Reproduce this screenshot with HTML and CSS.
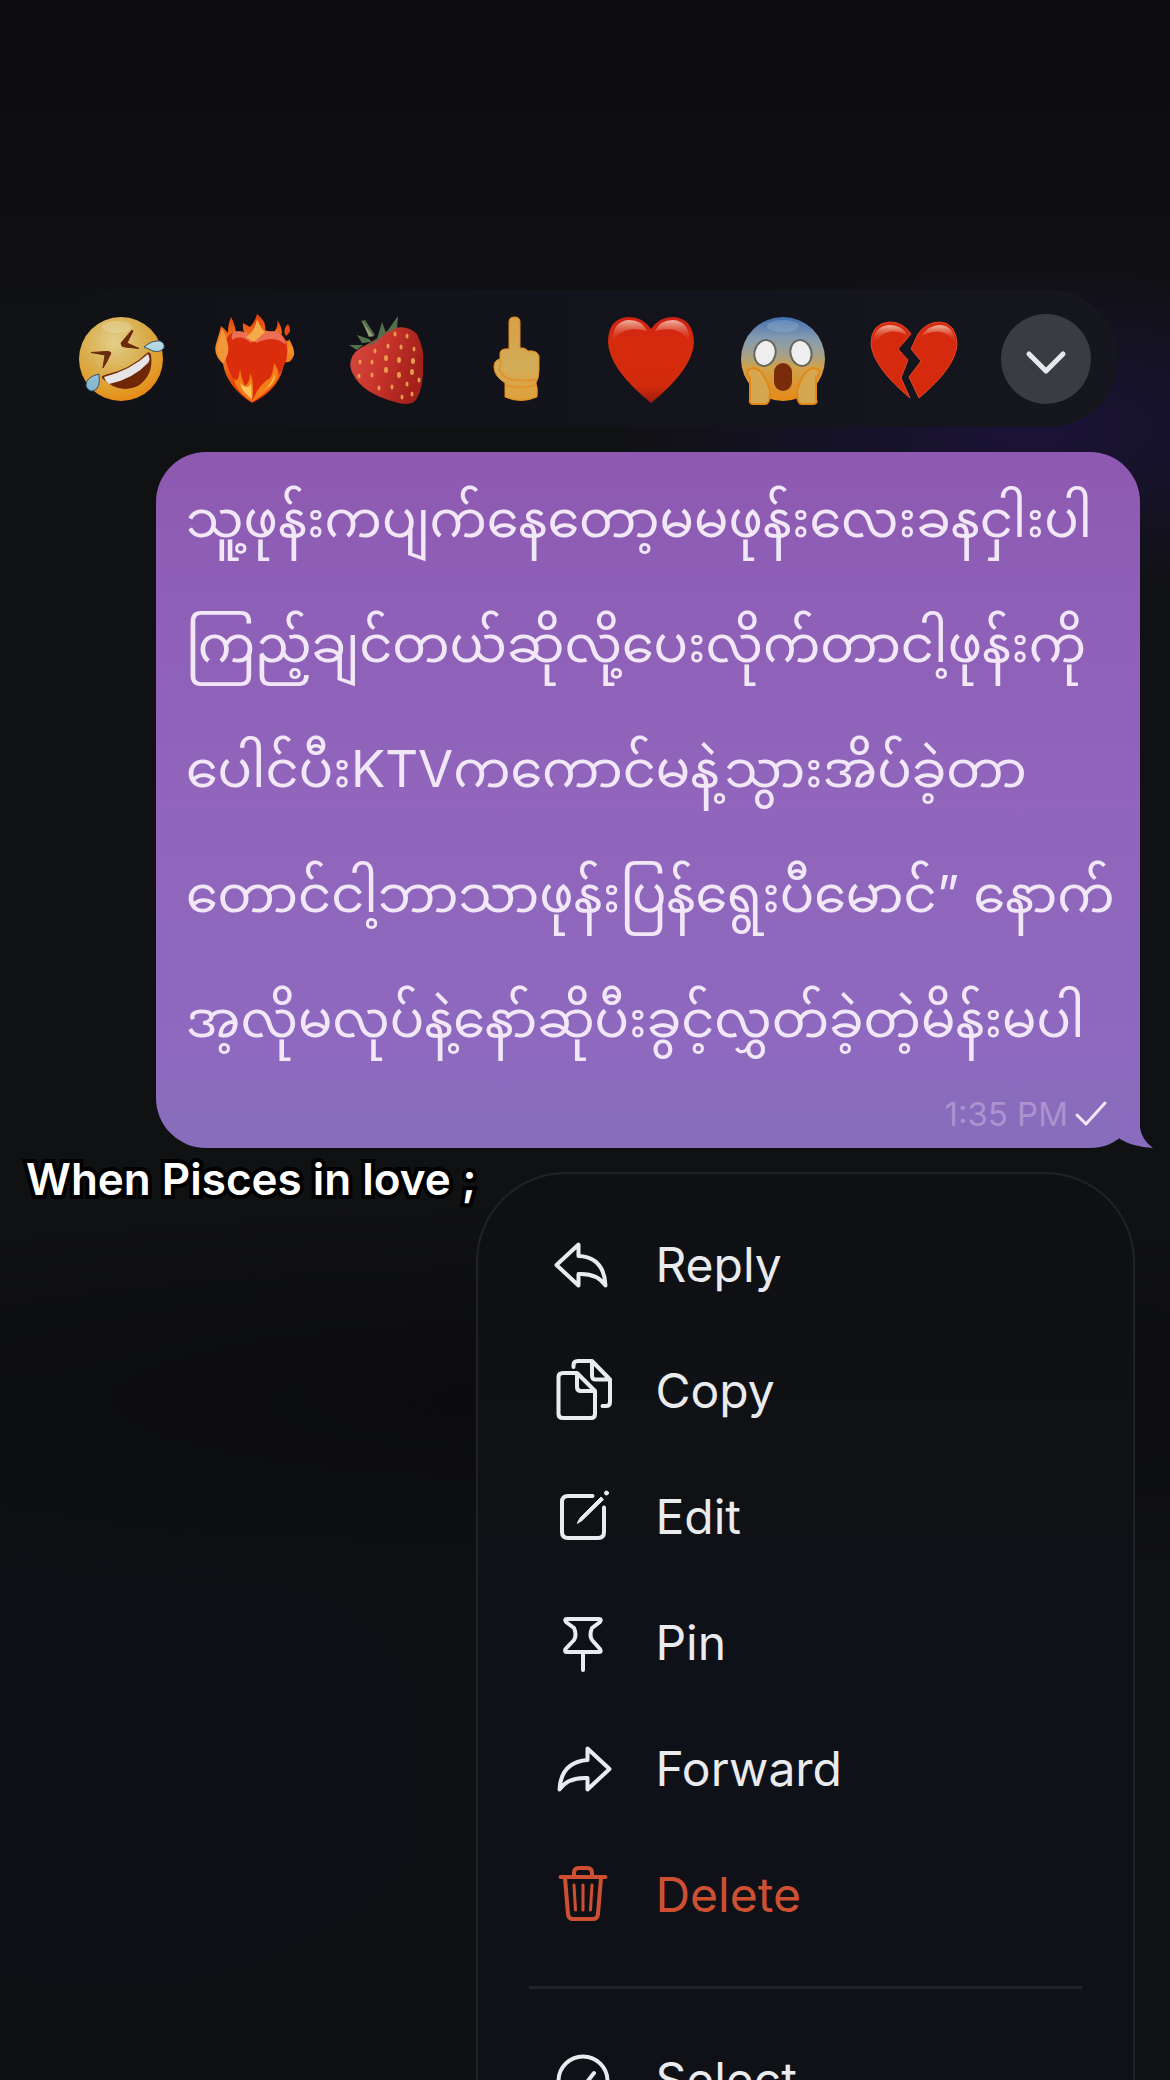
FILE: index.html
```html
<!DOCTYPE html>
<html lang="my">
<head>
<meta charset="utf-8">
<meta name="viewport" content="width=device-width, initial-scale=1">
<title>Message actions</title>
<link rel="stylesheet" href="styles.css">
</head>
<body>
<main class="screen">
  <div class="reactions" role="toolbar" aria-label="Reactions">
    <button class="reaction" type="button" aria-label="Rolling on the floor laughing">
      <svg viewBox="0 0 100 100" aria-hidden="true">
        <defs>
          <radialGradient id="face" cx=".42" cy=".3" r=".75"><stop offset="0" stop-color="#e2cf8c"/><stop offset=".5" stop-color="#d9ad4c"/><stop offset=".8" stop-color="#e39a26"/><stop offset="1" stop-color="#e8800f"/></radialGradient>
          <linearGradient id="tear" x1="0" y1="0" x2="0" y2="1"><stop offset="0" stop-color="#b9dbe4"/><stop offset="1" stop-color="#7fb4cc"/></linearGradient>
        </defs>
        <circle cx="50" cy="50" r="42" fill="url(#face)"/>
        <ellipse cx="46" cy="18" rx="15" ry="6" fill="#ebe2b8" opacity=".35"/>
        <path d="M61 21L50 34Q50 38 54 38L68 39.500L56 34L62 22ZM20 43.500L34 46L32 59Q36 53 40 44Q39 42 35 42.500Z" fill="#6b2a0a" stroke="#6b2a0a" stroke-width="1" stroke-linejoin="round"/>
        <path d="M31 69Q30 67 34 66Q60 60 76 44Q79 42 80 46Q83 66 67 77Q48 86 31 69Z" fill="#702706"/>
        <path d="M33 68Q60 61 77 45Q80 50 77 54Q62 70 38 75Q34 72 33 68Z" fill="#e6e4e6"/>
        <path d="M73 38Q81 31 89 32Q94 34 93 39Q89 44 82 42ZM28 65Q15 68 15 76Q16 82 22 82Q30 80 28 65Z" fill="url(#tear)" stroke="#34546a" stroke-width="1"/>
      </svg>
    </button>
    <button class="reaction" type="button" aria-label="Heart on fire">
      <svg viewBox="0 0 100 100" aria-hidden="true">
        <defs>
          <linearGradient id="flame" x1="0" y1="0" x2="0" y2="1"><stop offset="0" stop-color="#e63b08"/><stop offset=".4" stop-color="#f2912a"/><stop offset=".75" stop-color="#e84a0a"/><stop offset="1" stop-color="#d82a0a"/></linearGradient>
        </defs>
        <path d="M49 94Q24 78 20 55Q10 46 13 35Q16 25 18 17Q22 20 25 24Q25 15 28 8Q33 18 33 25L43 28Q39 20 40 14L47 18Q52 13 54 5Q64 13 62 21L70 24Q76 18 74 11Q81 20 78 28Q86 35 86 30Q92 40 91 46Q88 55 81 53Q78 80 49 94Z" fill="url(#flame)"/>
        <path d="M82 25Q80 20 85 15Q90 22 83 27Z" fill="#e94c12"/>
        <path d="M51 33Q43 20 30 23Q17 31 22 49Q29 76 49 93Q73 77 83 52Q88 30 75 23Q60 20 51 33Z" fill="#d92d0c"/>
        <path d="M50 32Q43 19 30 23Q28 27 29 31Q38 25 48 34ZM52 32Q61 19 75 23Q82 28 83 36Q72 25 53 34Z" fill="#f58a74" opacity=".7"/>
        <path d="M20 54Q12 44 15 34L19 19Q24 29 25 36Q27 45 20 54Z" fill="#f0983a"/>
        <path d="M43 28Q52 23 54 10Q58 20 62 23L51 33Z" fill="#f4ac48"/>
        <path d="M49 93Q32 82 31 69Q35 76 37 60Q39 72 42 77Q47 74 47 64Q52 74 49 93Q55 76 67 69Q70 65 71 54Q77 62 75 69Q69 81 49 93Z" fill="#f47c18"/>
        <path d="M49 90Q38 82 37 74Q45 82 48 74ZM53 86Q66 81 72 65Q73 76 53 86Z" fill="#ffc45a"/>
      </svg>
    </button>
    <button class="reaction" type="button" aria-label="Strawberry">
      <svg viewBox="0 0 100 100" aria-hidden="true">
        <defs>
          <linearGradient id="berry" x1="0" y1="0" x2="1" y2=".3"><stop offset="0" stop-color="#d84a42"/><stop offset=".5" stop-color="#c8352c"/><stop offset="1" stop-color="#a3211a"/></linearGradient>
        </defs>
        <path d="M16 51Q18 42 31 36Q44 29 52 22Q70 13 82 25Q90 41 88 55Q89 78 81 91Q75 98 60 93Q27 84 18 65Q14 58 16 51Z" fill="url(#berry)"/>
        <path d="M26 12L30 11L40 26L37 28ZM22 26L34 30L37 33L27 34ZM14 36L28 36L22 41ZM42 30L47 13L51 24L63 7L62 19L50 25L40 34L30 38Z" fill="#53704a"/>
        <path d="M27 12L38 27L34 28Z" fill="#92a17a"/>
        <g fill="#e99b4d"><ellipse cx="60" cy="25" rx="1.500" ry="2.500"/><ellipse cx="72" cy="27" rx="1.500" ry="2.500"/><ellipse cx="40" cy="42" rx="1.500" ry="2.500"/><ellipse cx="53" cy="37" rx="1.500" ry="2.500"/><ellipse cx="66" cy="38" rx="1.500" ry="2.500"/><ellipse cx="79" cy="40" rx="1.500" ry="2.500"/><ellipse cx="25" cy="53" rx="1.500" ry="2.500"/><ellipse cx="37" cy="53" rx="1.500" ry="2.500"/><ellipse cx="51" cy="49" rx="2" ry="3"/><ellipse cx="64" cy="51" rx="2" ry="3"/><ellipse cx="78" cy="52" rx="2" ry="3"/><ellipse cx="24" cy="67" rx="1.500" ry="2.500"/><ellipse cx="37" cy="66" rx="1.500" ry="2.500"/><ellipse cx="51" cy="61" rx="2" ry="3"/><ellipse cx="64" cy="66" rx="2" ry="3"/><ellipse cx="77" cy="63" rx="2" ry="3"/><ellipse cx="44" cy="79" rx="1.500" ry="2.500"/><ellipse cx="57" cy="78" rx="1.500" ry="2.500"/><ellipse cx="72" cy="75" rx="1.500" ry="2.500"/><ellipse cx="84" cy="71" rx="1.500" ry="2.500"/><ellipse cx="67" cy="88" rx="1.500" ry="2.500"/><ellipse cx="77" cy="85" rx="1.500" ry="2.500"/></g>
      </svg>
    </button>
    <button class="reaction" type="button" aria-label="Middle finger">
      <svg viewBox="0 0 100 100" aria-hidden="true">
        <defs><linearGradient id="skin" x1="0" y1="0" x2="0" y2="1"><stop offset="0" stop-color="#d9a045"/><stop offset=".6" stop-color="#d3ac58"/><stop offset="1" stop-color="#dda03a"/></linearGradient></defs>
        <path d="M42 13Q42 8 47.500 8Q53 8 53 13L53 39Q58 38 61 42Q70 41 72 47V61Q72 69 69 74Q71 79 70 88Q54 95 38 88L38 74Q27 67 27 58Q27 51 33 50V44Q34 39 42 40Z" fill="url(#skin)" stroke="#e38a1c" stroke-width="1"/>
        <path d="M33 51Q35 57 32 60Q38 72 51 71Q61 73 69 70M39 76Q54 81 69 76" fill="none" stroke="#e2932c" stroke-width="2"/>
      </svg>
    </button>
    <button class="reaction" type="button" aria-label="Red heart">
      <svg viewBox="0 0 100 100" aria-hidden="true">
        <defs><linearGradient id="gloss" x1="0" y1="0" x2="0" y2="1"><stop offset="0" stop-color="#efb5a0"/><stop offset="1" stop-color="#d62c0f" stop-opacity="0"/></linearGradient>
        <linearGradient id="heart" x1="0" y1="0" x2="0" y2="1"><stop offset="0" stop-color="#cf2014"/><stop offset=".3" stop-color="#d62c0d"/><stop offset=".8" stop-color="#d22a0c"/><stop offset="1" stop-color="#9c1c10"/></linearGradient></defs>
        <path d="M51 20Q43 8 29 8Q8 9 8 33Q9 60 51 94Q93 60 94 33Q93 9 73 8Q59 8 51 20Z" fill="url(#heart)"/>
        <path d="M12 35Q12 12 29 11Q42 11 47 22Q28 17 18 26Q14 32 12 35ZM90 35Q90 12 73 11Q60 11 55 22Q74 17 84 26Q88 32 90 35Z" fill="url(#gloss)"/>
      </svg>
    </button>
    <button class="reaction" type="button" aria-label="Face screaming in fear">
      <svg viewBox="0 0 100 100" aria-hidden="true">
        <defs><linearGradient id="fear" x1="0" y1="0" x2="0" y2="1"><stop offset="0" stop-color="#426eb0"/><stop offset=".25" stop-color="#849bb0"/><stop offset=".45" stop-color="#a5a18b"/><stop offset=".6" stop-color="#d0a24a"/><stop offset="1" stop-color="#e68a17"/></linearGradient></defs>
        <circle cx="51" cy="50" r="42" fill="url(#fear)"/>
        <ellipse cx="51" cy="17" rx="16" ry="6" fill="#b5cbe0" opacity=".25"/>
        <g fill="#eee" stroke="#66675f" stroke-width="2"><ellipse cx="33" cy="44" rx="10.500" ry="13" transform="rotate(14 33 44)"/><ellipse cx="69" cy="44" rx="10.500" ry="13" transform="rotate(-14 69 44)"/></g>
        <rect x="42" y="54" width="18" height="28" rx="9" fill="#7a2c0a"/>
        <path d="M18 90V69Q11 61 21 59Q32 60 38 82Q38 95 33 95H21Q17 95 18 90ZM84 90V69Q92 61 82 59Q71 60 65 82Q65 95 70 95H81Q86 95 84 90Z" fill="#d5a750" stroke="#e38818" stroke-width="2"/>
      </svg>
    </button>
    <button class="reaction" type="button" aria-label="Broken heart">
      <svg viewBox="0 0 100 100" aria-hidden="true">
        <path d="M47 25Q39 13 26 13Q7 14 7 35Q9 58 46 89L37 69L44 51L34 40ZM54 25Q62 13 76 13Q92 14 93 35Q92 58 55 89L45 68L57 52L47 40Z" fill="#d52a0d" stroke="#e84426" stroke-width="1"/>
        <path d="M9 35Q9 17 26 16Q38 16 43 26Q25 17 15 29ZM91 35Q91 17 76 16Q65 16 57 27Q76 18 86 28Z" fill="url(#gloss)"/>
      </svg>
    </button>
    <button class="reaction more" type="button" aria-label="More reactions">
      <svg viewBox="0 0 90 90" aria-hidden="true"><path d="M28 40L45 57L62 40" fill="none" stroke="#e4e9ec" stroke-width="5" stroke-linecap="round" stroke-linejoin="round"/></svg>
    </button>
  </div>

  <article class="bubble">
    <p class="message">သူ့ဖုန်းကပျက်နေတော့မမဖုန်းလေးခနငှါးပါ<br>ကြည့်ချင်တယ်ဆိုလို့ပေးလိုက်တာငါ့ဖုန်းကို<br>ပေါင်ပီးKTVကကောင်မနဲ့သွားအိပ်ခဲ့တာ<br>တောင်ငါ့ဘာသာဖုန်းပြန်ရွေးပီမောင်” နောက်<br>အ့လိုမလုပ်နဲ့နော်ဆိုပီးခွင့်လွှတ်ခဲ့တဲ့မိန်းမပါ</p>
    <footer class="meta">
      <time datetime="13:35">1:35 PM</time>
      <svg class="sent" viewBox="0 0 34 28" role="img" aria-label="Sent"><path d="M3 15L12 24L31 3" fill="none" stroke="#f1e7f7" stroke-width="3" stroke-linecap="round" stroke-linejoin="round"/></svg>
    </footer>
    <svg class="tail" viewBox="0 0 64 50" aria-hidden="true"><path d="M50 0V30Q52 42 63 50Q43 49 30 41L16 20Z" fill="#896cbd"/></svg>
  </article>

  <div class="lower">
    <h1 class="caption" lang="en">When Pisces in love ;</h1>
    <nav class="menu" lang="en" aria-label="Message actions">
      <button class="item" type="button"><svg viewBox="0 0 60 60" aria-hidden="true"><path d="M3.500 30L25.500 9.500V21Q51 22 52.500 50.500Q44 38 25.500 39V50.500Z"/></svg>Reply</button>
      <button class="item" type="button"><svg viewBox="0 0 60 60" aria-hidden="true"><path d="M24 12H10Q5.500 12 5.500 16V53Q5.500 57 10 57H38Q42 57 42 53V30ZM24 12V26Q24 30 28 30H42M20.500 6V4Q20.500 0 25 0H39L57 18.500V41Q57 45 53 45H49.500M39 0V15Q39 18.500 43 18.500H57"/></svg>Copy</button>
      <button class="item" type="button"><svg viewBox="0 0 60 60" aria-hidden="true"><path d="M39.500 9H15Q9 9 9 15V45Q9 51 15 51H45Q51 51 51 45V20.500"/><path d="M24.500 36L27 31L48 10L50.500 12.500L29 33.500Z" fill="currentColor" stroke-width="1"/><circle cx="53.500" cy="6" r="2" fill="currentColor" stroke-width="1"/></svg>Edit</button>
      <button class="item" type="button"><svg viewBox="0 0 60 60" aria-hidden="true"><path d="M14 6H46Q49 6 47 9L39 15Q36 22 39 27L47 36Q49 39 46 39H14Q11 39 12.500 36L21 27Q24 22 21 15L13 9Q11 6 14 6ZM30 39V57"/></svg>Pin</button>
      <button class="item" type="button"><svg viewBox="0 0 60 60" aria-hidden="true"><path d="M56.500 30L34.500 9.500V21Q8 23 6.500 50.500Q15 38 34.500 39V50.500Z"/></svg>Forward</button>
      <button class="item danger" type="button"><svg viewBox="0 0 60 60" aria-hidden="true"><path d="M7.500 12H52.500M21 12V8Q21 3 26 3H34Q39 3 39 8V12M12 13L15 49Q15.500 54 20 54H40Q44.500 54 45 49L48 13"/><path d="M21 20L22.500 45M30 20V45M39 20L37.500 45" stroke-width="3"/></svg>Delete</button>
      <hr class="rule">
      <button class="item" type="button"><svg viewBox="0 0 60 60" aria-hidden="true"><circle cx="30" cy="31" r="24.500"/><path d="M19 33L27 41L41 23"/></svg>Select</button>
    </nav>
  </div>
</main>
</body>
</html>
```
FILE: styles.css
```css
* {
  box-sizing: border-box;
}

body {
  margin: 0;
  background: #0f1012;
  color: #e9ebee;
  font-family: Inter, "Noto Sans", "Noto Sans Myanmar", sans-serif;
}

button {
  border: 0;
  padding: 0;
  background: none;
  color: inherit;
  font: inherit;
}

.screen {
  display: flex;
  flex-direction: column;
  height: 100vh;
  overflow: hidden;
  padding-top: 290px;
  background:
    radial-gradient(ellipse 420px 170px at 88% 430px, #1b1338, transparent),
    radial-gradient(ellipse 100% 200px at 50% 1400px, #0b0b0e, transparent),
    radial-gradient(ellipse 700px 500px at 10% 1750px, #0d1015, transparent),
    linear-gradient(#0c0b0f, #101113 320px, #101113 1200px, #0f1114);
}

.reactions {
  display: grid;
  grid-template-columns: repeat(8, 1fr);
  align-items: center;
  justify-items: center;
  flex: none;
  height: 137px;
  margin: 0 52px 0 53px;
  padding: 0 6px 0 2px;
  border-radius: 69px;
  background: linear-gradient(90deg, #101216, #13131b 50%, #16161e);
}

.reaction {
  width: 100px;
  height: 100px;
}

.reaction svg {
  display: block;
  width: 100%;
  height: 100%;
}

.more {
  width: 90px;
  height: 90px;
  border-radius: 50%;
  background: #393c40;
}

.bubble {
  position: relative;
  flex: none;
  margin: 25px 30px 0 156px;
  padding: 4px 32px 14px 30px;
  border-radius: 50px;
  background: linear-gradient(#8e59b0, #8e5fb7 20%, #9065bb 50%, #8e69bf 86%, #896cbc 93%, #896dbd);
}

.message {
  margin: 0 0 13px;
  color: #f1e7f7;
  font-size: 51px;
  line-height: 125px;
  white-space: nowrap;
}

.meta {
  display: flex;
  align-items: center;
  justify-content: flex-end;
  gap: 6px;
  color: #ab93d0;
  font-size: 33px;
  line-height: 40px;
}

.sent {
  width: 34px;
  height: 28px;
}

.tail {
  position: absolute;
  right: -14px;
  bottom: 0;
  width: 64px;
  height: 50px;
}

.lower {
  display: flex;
  align-items: flex-start;
  justify-content: space-between;
  flex: none;
  margin: 0 36px 0 26px;
}

.caption {
  flex: 0 1 0;
  margin: 0;
  color: #fff;
  font-size: 44px;
  font-weight: 600;
  line-height: 62px;
  white-space: nowrap;
  -webkit-text-stroke: 8px #000;
  paint-order: stroke fill;
}

.menu {
  flex: none;
  width: 659px;
  margin-top: 24px;
  padding: 28px 51px;
  border: 2px solid #202326;
  border-radius: 90px;
  background: linear-gradient(#0f1014, #101114 330px, #0e1118 400px, #0f1116);
}

.item {
  display: flex;
  align-items: center;
  gap: 42px;
  width: 100%;
  height: 126px;
  padding: 0 24px;
  font-size: 48px;
  line-height: 60px;
}

.item svg {
  width: 60px;
  height: 60px;
  overflow: visible;
  fill: none;
  stroke: currentColor;
  stroke-width: 4;
  stroke-linecap: round;
  stroke-linejoin: round;
}

.danger {
  color: #ce5032;
}

.rule {
  height: 3px;
  margin: 28px 0;
  border: 0;
  background: #212429;
}
```
